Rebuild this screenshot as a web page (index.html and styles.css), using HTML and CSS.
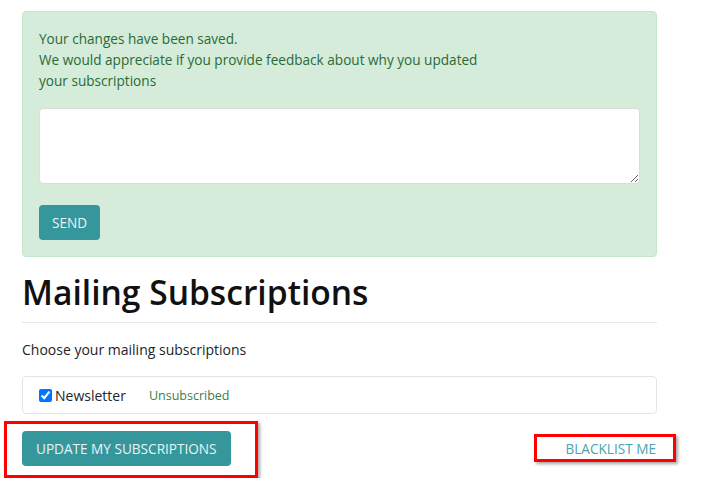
FILE: index.html
```html
<!DOCTYPE html>
<html lang="en">
<head>
    <meta charset="UTF-8">
    <meta name="viewport" content="width=device-width, initial-scale=1.0">
    <title>Mailing Subscriptions</title>
    <link rel="stylesheet" href="styles.css">
</head>
<body>
    <div class="container">
        <div class="alert">
            <p>Your changes have been saved.<br>
            We would appreciate if you provide feedback about why you updated<br>
            your subscriptions</p>
            <textarea class="feedback"></textarea>
            <button type="button" class="btn">SEND</button>
        </div>

        <h1>Mailing Subscriptions</h1>
        <p class="lead">Choose your mailing subscriptions</p>

        <div class="list">
            <label class="item">
                <input type="checkbox" checked>
                <span class="name">Newsletter</span>
            </label>
            <span class="status">Unsubscribed</span>
        </div>

        <div class="actions">
            <div class="frame frame-left">
                <button type="button" class="btn">UPDATE MY SUBSCRIPTIONS</button>
            </div>
            <div class="frame frame-right">
                <a href="#" class="link">BLACKLIST ME</a>
            </div>
        </div>
    </div>
</body>
</html>
```

FILE: styles.css
```css
body {
    font-family: "Open Sans", "Noto Sans", sans-serif;
    font-size: 14px;
    color: #212529;
    background-color: #fff;
    margin: 0;
}

.container {
    width: 635px;
    padding: 11px 0 0 22px;
}

.alert {
    background-color: #d4ecd9;
    border: 1px solid #c6e5cd;
    border-radius: 4px;
    padding: 16px;
    color: #2b6a37;
}

.alert p {
    margin: 0 0 17px;
    line-height: 21px;
    font-size: 13.6px;
}

.feedback {
    display: block;
    width: 100%;
    height: 76px;
    box-sizing: border-box;
    border: 1px solid #dcdcdc;
    border-radius: 4px;
    margin-bottom: 21px;
    resize: vertical;
}

.btn {
    display: block;
    padding: 0 14px;
    height: 35px;
    font-family: inherit;
    font-size: 13.6px;
    background-color: #35979c;
    color: #e9f4f4;
    border: none;
    border-radius: 4px;
    cursor: pointer;
}

.alert .btn {
    padding: 0 13px;
}

h1 {
    font-size: 33.6px;
    font-weight: 600;
    color: #111;
    margin: 13px 0 0;
    padding-bottom: 8px;
    line-height: 44px;
    border-bottom: 1px solid #e6e6e6;
}

.lead {
    margin: 17px 0 16px;
    line-height: 20px;
}

.list {
    display: flex;
    align-items: center;
    height: 36px;
    border: 1px solid #e4e4e4;
    border-radius: 4px;
    padding-left: 16px;
}

.item {
    display: flex;
    align-items: center;
    font-size: 14px;
}

.item input {
    margin: 0 3px 0 0;
    width: 13px;
    height: 13px;
}

.status {
    color: #3a7d4c;
    font-size: 12.5px;
    margin-left: 23px;
}

.actions {
    display: flex;
    justify-content: space-between;
    align-items: flex-start;
    margin-top: 7px;
}

.frame {
    border: 3px solid #f00;
    box-shadow: 2px 2px 3px rgba(0, 0, 0, 0.35);
}

.frame-left {
    margin-left: -18px;
    padding: 7px 24px 9px 15px;
}

.frame-right {
    margin-top: 13px;
    margin-right: -19px;
    padding: 0 17px 0 28px;
    height: 22px;
    display: flex;
    align-items: center;
}

.link {
    color: #4aa4ab;
    text-decoration: none;
    font-size: 13.6px;
}
```
